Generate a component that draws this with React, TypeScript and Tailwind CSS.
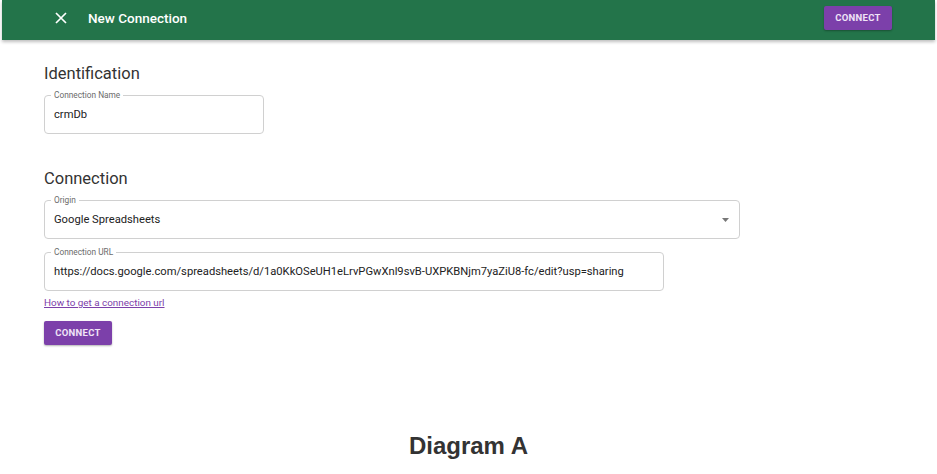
import React from "react";

function Field({ label, value, width, select }: { label: string; value: string; width: string; select?: boolean }) {
  return (
    <div className={`relative ${width} h-[39px] rounded-[4px] border border-[#d0d0d0] flex items-center pl-[9px] pt-[1px]`}>
      <span className="absolute -top-[6px] left-[6px] px-[3px] bg-white text-[8.3px] leading-[10px] text-[#6b6b6b]">{label}</span>
      <span className="text-[11.2px] text-[#222]">{value}</span>
      {select && (
        <svg className="absolute right-[10px] top-[17px]" width="7" height="4" viewBox="0 0 7 4">
          <path d="M0 0 L7 0 L3.5 4 Z" fill="#777" />
        </svg>
      )}
    </div>
  );
}

export default function App() {
  return (
    <div className="w-[937px] h-[474px] bg-white relative overflow-hidden" style={{ fontFamily: "Roboto, 'Noto Sans', sans-serif" }}>
      <div className="ml-[2px] mr-[2px] h-[40px] pb-[4px] bg-[#23744a] flex items-center shadow-[0_2px_3px_rgba(0,0,0,0.25)]">
        <svg className="ml-[53px]" width="12" height="12" viewBox="0 0 12 12">
          <path d="M1 1 L11 11 M11 1 L1 11" stroke="#fff" strokeWidth="1.7" />
        </svg>
        <span className="ml-[21px] text-[13.5px] font-medium text-white">New Connection</span>
        <div className="flex-1" />
        <button className="mr-[43px] w-[68px] h-[24px] rounded-[2px] bg-[#7c40aa] text-[9.5px] font-bold tracking-[0.3px] text-[#f0e4f7] shadow-[0_1px_2px_rgba(0,0,0,0.3)]">
          CONNECT
        </button>
      </div>
      <div className="pl-[44px]">
        <div className="mt-[24px] text-[16.5px] leading-[20px] text-[#333]">Identification</div>
        <div className="mt-[11px]">
          <Field label="Connection Name" value="crmDb" width="w-[220px]" />
        </div>
        <div className="mt-[35px] text-[16.5px] leading-[20px] text-[#333]">Connection</div>
        <div className="mt-[11px]">
          <Field label="Origin" value="Google Spreadsheets" width="w-[696px]" select />
        </div>
        <div className="mt-[13px]">
          <Field
            label="Connection URL"
            value="https://docs.google.com/spreadsheets/d/1a0KkOSeUH1eLrvPGwXnl9svB-UXPKBNjm7yaZiU8-fc/edit?usp=sharing"
            width="w-[620px]"
          />
        </div>
        <div className="mt-[6px] text-[9.9px] leading-[12px] text-[#7c40aa] underline">How to get a connection url</div>
        <button className="mt-[12px] w-[68px] h-[24px] rounded-[2px] bg-[#7c40aa] text-[9.5px] font-bold tracking-[0.3px] text-[#f0e4f7] shadow-[0_1px_2px_rgba(0,0,0,0.3)]">
          CONNECT
        </button>
      </div>
      <div className="absolute left-0 right-0 top-[428px] text-center text-[24px] font-bold text-[#333]" style={{ fontFamily: "'Liberation Sans', Arial, sans-serif" }}>
        Diagram A
      </div>
    </div>
  );
}
